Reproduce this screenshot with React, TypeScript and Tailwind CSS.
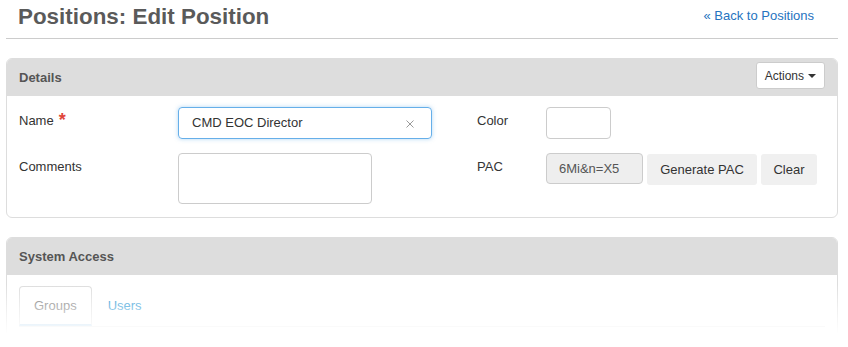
import React from "react";

// Edit Position form: page header, Details panel, System Access panel with tabs

function Caret() {
  return <span className="ml-[4px] inline-block h-0 w-0 border-x-[4px] border-t-[4px] border-x-transparent border-t-[#333]" />;
}

function Panel({ title, action, children }: { title: string; action?: React.ReactNode; children: React.ReactNode }) {
  return (
    <div className="rounded-[6px] border border-[#ddd] bg-white">
      <div className="flex h-[37px] items-start justify-between rounded-t-[5px] bg-[#ddd] px-[12px]">
        <span className="pt-[10px] text-[13px] font-bold leading-[18px] text-[#555]">{title}</span>
        {action}
      </div>
      {children}
    </div>
  );
}

export default function App() {
  return (
    <div className="relative h-[347px] w-[848px] overflow-hidden bg-white font-['Liberation_Sans',Arial,sans-serif] text-[#333]">
      <div className="pl-[6px] pr-[10px]">
        {/* page header */}
        <div className="flex h-[39px] items-start justify-between border-b border-[#ccc]">
          <h1 className="pl-[12px] pt-[5px] text-[22.4px] font-bold leading-[24px] text-[#5a5a5a]">Positions: Edit Position</h1>
          <a className="pr-[24px] pt-[7px] text-[13px] leading-[18px] text-[#2573c0]">« Back to Positions</a>
        </div>

        <div className="mt-[19px]">
          <Panel
            title="Details"
            action={
              <button className="mt-[3px] flex h-[27px] items-center rounded-[3px] border border-[#ccc] bg-white px-[8px] text-[12px] text-[#333]">
                Actions
                <Caret />
              </button>
            }
          >
            <div className="grid grid-cols-[458px_1fr] px-[12px] pb-[13px] pt-[11px]">
              {/* left column */}
              <div className="flex flex-col gap-[14px]">
                <div className="flex">
                  <label className="flex w-[159px] items-start pt-[5px] text-[13px] leading-[18px]">
                    Name
                    <span className="ml-[5px] -mt-[1px] text-[18px] font-bold leading-none text-[#e0453a]">*</span>
                  </label>
                  <div className="relative flex h-[32px] w-[254px] items-center rounded-[4px] border border-[#66afe9] pl-[13px] shadow-[0_0_4px_rgba(102,175,233,0.5)]">
                    <span className="text-[13px] text-[#333]">CMD EOC Director</span>
                    <svg className="absolute right-[17px] top-[12px]" width="8" height="8" viewBox="0 0 8 8">
                      <path d="M0.5 0.5 L7.5 7.5 M7.5 0.5 L0.5 7.5" stroke="#999" strokeWidth="1" />
                    </svg>
                  </div>
                </div>
                <div className="flex">
                  <label className="w-[159px] pt-[5px] text-[13px] leading-[18px]">Comments</label>
                  <div className="h-[51px] w-[194px] rounded-[4px] border border-[#ccc]" />
                </div>
              </div>

              {/* right column */}
              <div className="flex flex-col gap-[14px]">
                <div className="flex">
                  <label className="w-[69px] pt-[5px] text-[13px] leading-[18px]">Color</label>
                  <div className="h-[32px] w-[65px] rounded-[4px] border border-[#ccc]" />
                </div>
                <div className="flex items-start">
                  <label className="w-[69px] pt-[5px] text-[13px] leading-[18px]">PAC</label>
                  <div className="flex h-[31px] w-[97px] items-center rounded-[4px] border border-[#ccc] bg-[#eee] pl-[12px] text-[13px] text-[#555]">
                    6Mi&amp;n=X5
                  </div>
                  <button className="ml-[4px] mt-[1px] h-[31px] w-[110px] rounded-[3px] bg-[#f0f0f0] text-[13px] text-[#333]">Generate PAC</button>
                  <button className="ml-[4px] mt-[1px] h-[31px] w-[56px] rounded-[3px] bg-[#f0f0f0] text-[13px] text-[#333]">Clear</button>
                </div>
              </div>
            </div>
          </Panel>
        </div>

        <div className="mt-[19px]">
          <Panel title="System Access">
            <div className="px-[12px] pt-[11px]">
              <div className="flex border-b border-[#ddd]">
                <div className="-mb-px flex h-[40px] items-center rounded-t-[4px] border border-b-2 border-[#ddd] border-b-[#8fc3e8] bg-white px-[14px] text-[13px] text-[#666]">
                  Groups
                </div>
                <div className="ml-[2px] flex h-[40px] items-center px-[14px] text-[13px] text-[#0086cc]">Users</div>
              </div>
              <div className="h-[80px]" />
            </div>
          </Panel>
        </div>
      </div>

      {/* bottom fade over the page */}
      <div className="pointer-events-none absolute inset-x-0 top-[284px] h-[50px] bg-linear-to-b from-white/0 via-white/50 via-44% to-white" />
      <div className="pointer-events-none absolute inset-x-0 bottom-0 top-[334px] bg-white" />
    </div>
  );
}
